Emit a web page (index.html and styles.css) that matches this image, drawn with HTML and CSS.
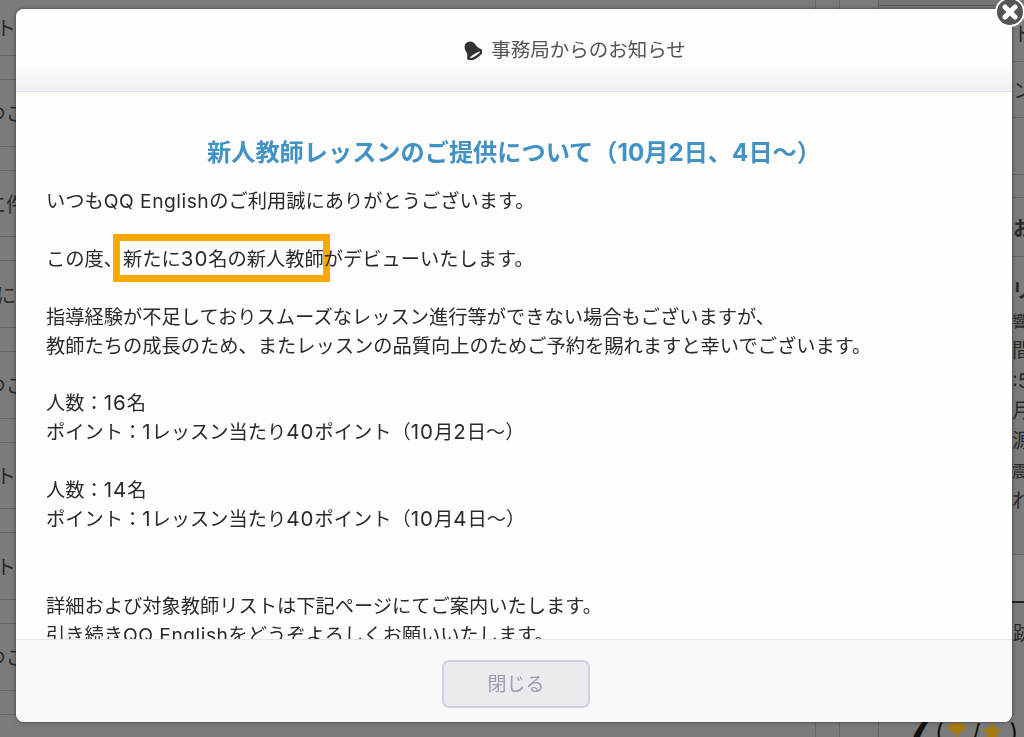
FILE: index.html
```html
<!DOCTYPE html>
<html lang="ja">
<head>
    <meta charset="UTF-8">
    <meta name="viewport" content="width=device-width, initial-scale=1.0">
    <title>事務局からのお知らせ</title>
    <link rel="stylesheet" href="styles.css">
</head>
<body>
    <!-- 背面のページ -->
    <div class="page">
        <div class="col-left">
            <div class="row-first">ント</div>
            <div class="row-thin"></div>
            <div class="row-tall cut">つご</div>
            <div class="row-thin"></div>
            <div class="row-tall cut">に件</div>
            <div class="row-thin"></div>
            <div class="row-tall">ごとに</div>
            <div class="row-thin"></div>
            <div class="row-tall cut">つご</div>
            <div class="row-thin"></div>
            <div class="row-tall">ポイント</div>
            <div class="row-thin"></div>
            <div class="row-tall">ポイント</div>
            <div class="row-thin"></div>
            <div class="row-tall cut">つご</div>
            <div class="row-thin"></div>
        </div>
        <div class="col-main"></div>
        <div class="col-narrow"></div>
        <div class="col-mid"></div>
        <div class="col-side">
            <div class="side-top"></div>
            <div class="side-row side-a">ト</div>
            <div class="side-row side-b">ン</div>
            <div class="side-row side-c"></div>
            <div class="side-row side-d"></div>
            <div class="side-row side-e bold">お</div>
            <div class="side-list">
                <div class="bold">リ</div>
                <div class="small">響</div>
                <div>間</div>
                <div>:5</div>
                <div>月</div>
                <div>源</div>
                <div class="small">震</div>
                <div>れ</div>
            </div>
            <div class="side-row side-f"></div>
            <div class="side-row side-g">跡</div>
            <div class="score">
                <span class="score-num">7</span>
                <span class="score-paren">(</span>
                <svg class="score-icon" viewBox="0 0 20 20"><path d="M5 1h10v2h4c0 4-2 6-5 7-1 1-2 2-3 2v4h3v3H6v-3h3v-4c-1 0-2-1-3-2-3-1-5-3-5-7h4z" fill="#a67c10"/></svg>
                <span class="score-slash">/</span>
                <svg class="score-star" viewBox="0 0 20 20"><path d="M10 0l3 6.500 7 .8-5.200 4.700 1.500 7L10 15.500 3.700 19l1.500-7L0 7.300l7-.8z" fill="#a67c10"/></svg>
                <span class="score-end">)</span>
            </div>
        </div>
    </div>

    <div class="overlay">
        <div class="modal">
            <div class="modal-header">
                <svg class="bell" viewBox="0 0 20 20">
                    <g transform="rotate(-32 10 10)">
                        <path d="M10 1C5.500 1 4 5 4 9c0 3-2 4-3 6.500h18C18 13 16 12 16 9c0-4-1.500-8-6-8z" fill="#333"/>
                        <ellipse cx="10" cy="16.500" rx="9" ry="2.800" fill="#333"/>
                        <ellipse cx="10" cy="15.800" rx="6" ry="1.100" fill="#fdfdfb"/>
                    </g>
                </svg>
                <span>事務局からのお知らせ</span>
            </div>
            <div class="modal-body">
                <h3 class="notice-title">新人教師レッスンのご提供について（10月2日、4日〜）</h3>
                <div class="notice-text">
                    いつも<span class="latin">QQ English</span>のご利用誠にありがとうございます。<br>
                    <br>
                    この度、<span class="mark">新たに<span class="num">30</span>名の新人教師</span>がデビューいたします。<br>
                    <br>
                    指導経験が不足しておりスムーズなレッスン進行等ができない場合もございますが、<br>
                    教師たちの成長のため、またレッスンの品質向上のためご予約を賜れますと幸いでございます。<br>
                    <br>
                    人数：<span class="num">16</span>名<br>
                    ポイント：<span class="num">1</span>レッスン当たり<span class="num">40</span>ポイント（<span class="num">10</span>月<span class="num">2</span>日〜）<br>
                    <br>
                    人数：<span class="num">14</span>名<br>
                    ポイント：<span class="num">1</span>レッスン当たり<span class="num">40</span>ポイント（<span class="num">10</span>月<span class="num">4</span>日〜）<br>
                    <br>
                    <br>
                    詳細および対象教師リストは下記ページにてご案内いたします。<br>
                    引き続き<span class="latin">QQ English</span>をどうぞよろしくお願いいたします。
                </div>
            </div>
            <div class="modal-footer">
                <button class="close-btn" disabled>閉じる</button>
            </div>
            <div class="close-x">
                <svg viewBox="0 0 26 26"><path d="M8 8l10 10M18 8L8 18" stroke="#fff" stroke-width="5" stroke-linecap="round"/></svg>
            </div>
        </div>
    </div>
</body>
</html>
```

FILE: styles.css
```css
html, body {
    height: 100%;
}
body {
    margin: 0;
    overflow: hidden;
    background: #7b7b7b;
    font-family: Inter, "Noto Sans CJK JP", sans-serif;
    color: #2b2b2b;
}
/* 背面のページ（暗転後の色） */
.page {
    display: flex;
    height: 737px;
    overflow: hidden;
    font-size: 20px;
}
.col-left {
    flex: none;
    width: 36px;
    margin-right: -20px;
    display: flex;
    flex-direction: column;
    overflow: hidden;
}
.col-left > div {
    display: flex;
    justify-content: flex-end;
    align-items: center;
    white-space: nowrap;
    padding-right: 20px;
    border-bottom: 1px solid #666;
    box-sizing: border-box;
}
.col-left > .cut {
    padding-right: 10px;
}
.row-first {
    height: 56px;
}
.row-thin {
    height: 24px;
}
.row-tall {
    height: 66.700px;
}
.col-main {
    flex: none;
    width: 800px;
    border-right: 1px solid #666;
    box-sizing: border-box;
}
.col-narrow {
    flex: none;
    width: 24px;
    border-right: 1px solid #666;
    box-sizing: border-box;
}
.col-mid {
    flex: none;
    width: 39px;
    border-right: 1px solid #666;
    box-sizing: border-box;
}
.col-side {
    flex: none;
    width: 145px;
    display: flex;
    flex-direction: column;
}
.side-top {
    height: 6px;
    background: #757575;
    border-bottom: 1px solid #5c5c5c;
    box-sizing: border-box;
    flex: none;
}
.side-row {
    flex: none;
    box-sizing: border-box;
    padding-left: 134px;
    display: flex;
    align-items: center;
    white-space: nowrap;
    border-bottom: 1px solid #666;
}
.side-a {
    height: 56px;
}
.side-b {
    height: 56px;
}
.side-c {
    height: 57px;
}
.side-d {
    height: 23px;
}
.side-e {
    height: 59px;
}
.bold {
    font-weight: bold;
}
.side-list {
    flex: none;
    height: 298px;
    padding: 19px 0 0 133px;
    box-sizing: border-box;
    border-bottom: 1px solid #666;
    line-height: 30px;
    white-space: nowrap;
}
.side-list .small {
    font-size: 16px;
}
.side-f {
    height: 48px;
    background: #848484;
    border-bottom: 2px solid #222;
}
.side-g {
    height: 59px;
    border-bottom: none;
}
.score {
    flex: none;
    display: flex;
    align-items: center;
    height: 140px;
    padding-left: 25px;
    font-size: 24px;
    color: #111;
}
.score-num {
    width: 30px;
    font-family: "Liberation Sans", sans-serif;
    font-size: 48px;
    font-weight: bold;
}
.score-paren {
    margin-left: 1px;
}
.score-icon {
    flex: none;
    width: 20px;
    height: 20px;
    margin-left: 3px;
}
.score-slash {
    margin-left: 5px;
}
.score-star {
    flex: none;
    width: 20px;
    height: 20px;
    margin-left: 2px;
}
.score-end {
    margin-left: 7px;
}
/* モーダル */
.overlay {
    position: fixed;
    top: 0;
    left: 0;
    right: 0;
    bottom: 0;
    padding: 9px 12px 15px 16px;
    box-sizing: border-box;
    display: flex;
}
.modal {
    position: relative;
    flex: 1;
    display: flex;
    flex-direction: column;
    background: #fdfdfb;
    border-radius: 8px;
    box-shadow: 0 0 4px rgba(0, 0, 0, 0.5);
}
.modal-header {
    flex: none;
    height: 83px;
    box-sizing: border-box;
    display: flex;
    justify-content: center;
    align-items: flex-start;
    gap: 9px;
    padding: 28px 0 0 120px;
    font-size: 19.500px;
    line-height: 26px;
    color: #555;
    background: linear-gradient(to bottom, #fdfdfb 0, #fdfdfb 51px, #f1f1f3 81px);
    border-bottom: 1px solid #e0e0e6;
    border-radius: 8px 8px 0 0;
}
.bell {
    width: 20px;
    height: 20px;
    margin-top: 3px;
}
.modal-body {
    position: relative;
    z-index: 0;
    flex: 1;
    overflow: hidden;
    padding: 0 30px;
}
.notice-title {
    margin: 45px 0 18px;
    text-align: center;
    font-size: 24.200px;
    line-height: 32px;
    color: #4292c6;
}
.notice-text {
    font-size: 19.250px;
    line-height: 28.900px;
    color: #2a2a2a;
    white-space: nowrap;
}
.latin {
    letter-spacing: 0.5px;
}
.num {
    font-size: 20.500px;
    line-height: 1;
    letter-spacing: 1px;
}
.mark {
    position: relative;
}
/* 画像上の注釈枠 */
.mark::before {
    content: "";
    position: absolute;
    left: -10px;
    right: -6px;
    top: -13px;
    bottom: -11px;
    border: 7px solid #ffa800;
    background: #fff;
    z-index: -1;
}
.modal-footer {
    flex: none;
    height: 83px;
    box-sizing: border-box;
    display: flex;
    justify-content: center;
    padding-top: 20px;
    background: #f9f9fa;
    border-top: 1px solid #e5e5e5;
    border-radius: 0 0 8px 8px;
}
.close-btn {
    width: 148px;
    height: 48px;
    margin-left: 4px;
    padding-bottom: 5px;
    background: #eaebee;
    border: 2px solid #cfd2dc;
    border-radius: 7px;
    font-family: inherit;
    font-size: 19px;
    color: #9a9cb2;
}
/* 閉じるアイコン */
.close-x {
    position: absolute;
    top: -12px;
    right: -13px;
    width: 26px;
    height: 26px;
    background: #555;
    border: 2px solid #fdfdfd;
    border-radius: 50%;
}
.close-x svg {
    display: block;
    width: 26px;
    height: 26px;
}
```
